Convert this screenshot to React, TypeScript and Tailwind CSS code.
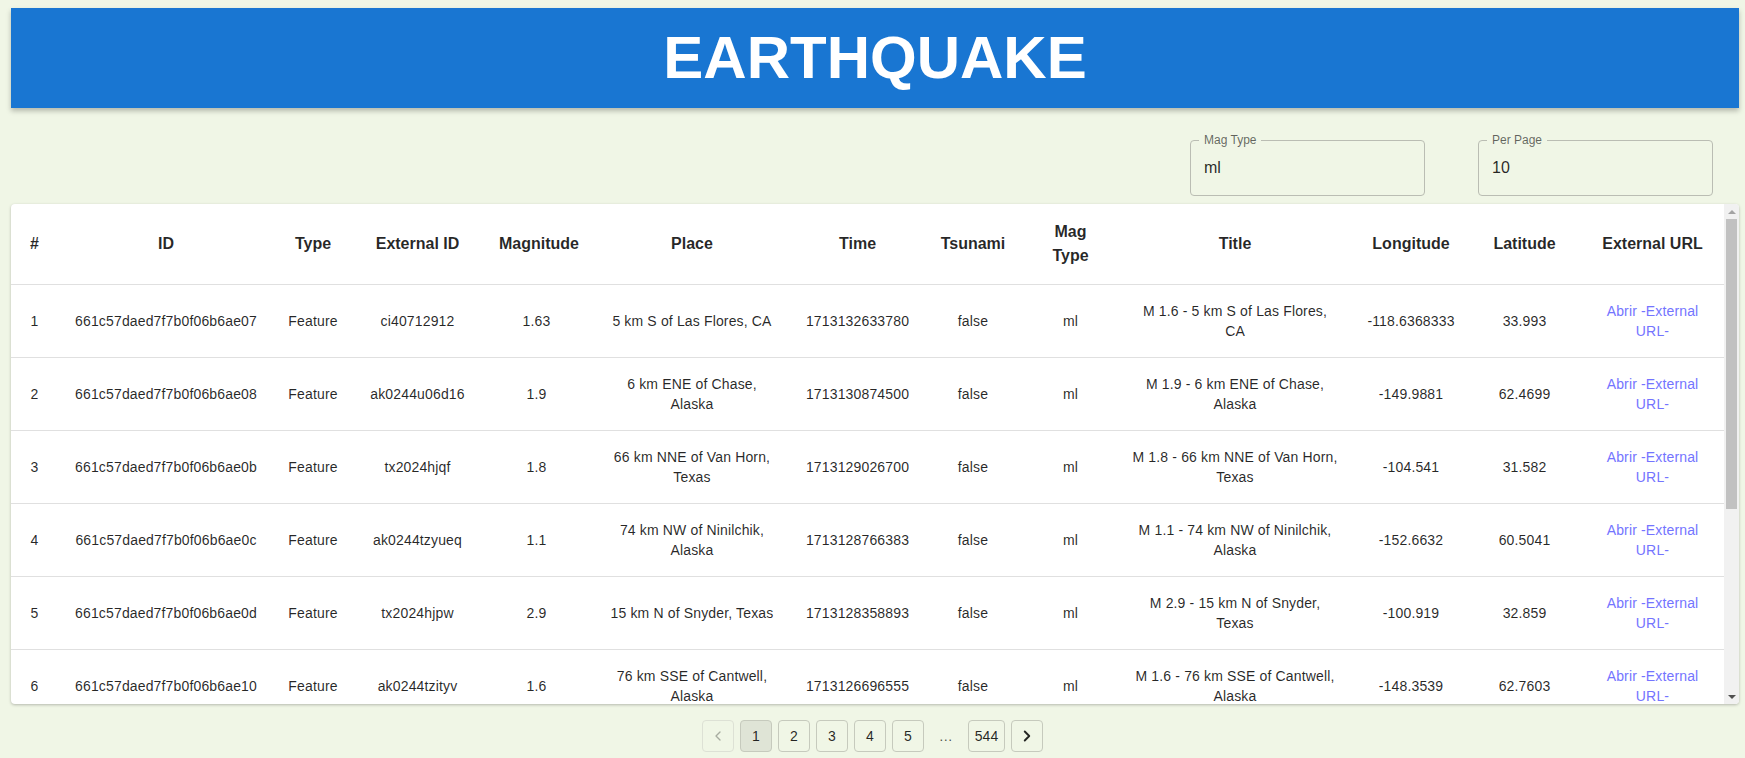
import { ChevronLeft, ChevronRight } from "lucide-react";

type Quake = {
  id: string;
  externalId: string;
  mag: string;
  place: string;
  time: string;
  title: string;
  lon: string;
  lat: string;
};

const quakes: Quake[] = [
  { id: "661c57daed7f7b0f06b6ae07", externalId: "ci40712912", mag: "1.63", place: "5 km S of Las Flores, CA", time: "1713132633780", title: "M 1.6 - 5 km S of Las Flores, CA", lon: "-118.6368333", lat: "33.993" },
  { id: "661c57daed7f7b0f06b6ae08", externalId: "ak0244u06d16", mag: "1.9", place: "6 km ENE of Chase, Alaska", time: "1713130874500", title: "M 1.9 - 6 km ENE of Chase, Alaska", lon: "-149.9881", lat: "62.4699" },
  { id: "661c57daed7f7b0f06b6ae0b", externalId: "tx2024hjqf", mag: "1.8", place: "66 km NNE of Van Horn, Texas", time: "1713129026700", title: "M 1.8 - 66 km NNE of Van Horn, Texas", lon: "-104.541", lat: "31.582" },
  { id: "661c57daed7f7b0f06b6ae0c", externalId: "ak0244tzyueq", mag: "1.1", place: "74 km NW of Ninilchik, Alaska", time: "1713128766383", title: "M 1.1 - 74 km NW of Ninilchik, Alaska", lon: "-152.6632", lat: "60.5041" },
  { id: "661c57daed7f7b0f06b6ae0d", externalId: "tx2024hjpw", mag: "2.9", place: "15 km N of Snyder, Texas", time: "1713128358893", title: "M 2.9 - 15 km N of Snyder, Texas", lon: "-100.919", lat: "32.859" },
  { id: "661c57daed7f7b0f06b6ae10", externalId: "ak0244tzityv", mag: "1.6", place: "76 km SSE of Cantwell, Alaska", time: "1713126696555", title: "M 1.6 - 76 km SSE of Cantwell, Alaska", lon: "-148.3539", lat: "62.7603" },
  { id: "661c57daed7f7b0f06b6ae12", externalId: "ak0244tzfx1c", mag: "1.4", place: "32 km W of Willow, Alaska", time: "1713125901234", title: "M 1.4 - 32 km W of Willow, Alaska", lon: "-150.6712", lat: "61.7458" },
  { id: "661c57daed7f7b0f06b6ae13", externalId: "ci40712880", mag: "1.12", place: "8 km NE of Aguanga, CA", time: "1713125017560", title: "M 1.1 - 8 km NE of Aguanga, CA", lon: "-116.8123333", lat: "33.4855" },
  { id: "661c57daed7f7b0f06b6ae15", externalId: "tx2024hjmk", mag: "2.1", place: "41 km W of Mentone, Texas", time: "1713124447911", title: "M 2.1 - 41 km W of Mentone, Texas", lon: "-103.998", lat: "31.701" },
  { id: "661c57daed7f7b0f06b6ae16", externalId: "ak0244tz7uqa", mag: "1.5", place: "19 km SE of Tyonek, Alaska", time: "1713123810032", title: "M 1.5 - 19 km SE of Tyonek, Alaska", lon: "-151.0204", lat: "60.9912" },
];

const columns = [
  { label: "#", width: "w-[47px]" },
  { label: "ID", width: "w-[216px]" },
  { label: "Type", width: "w-[78px]" },
  { label: "External ID", width: "w-[131px]" },
  { label: "Magnitude", width: "w-[107px]" },
  { label: "Place", width: "w-[204px]" },
  { label: "Time", width: "w-[127px]" },
  { label: "Tsunami", width: "w-[104px]" },
  { label: "Mag Type", width: "w-[91px]" },
  { label: "Title", width: "w-[238px]" },
  { label: "Longitude", width: "w-[114px]" },
  { label: "Latitude", width: "w-[113px]" },
  { label: "External URL", width: "" },
];

const Field = ({ label, value }: { label: string; value: string }) => (
  <div className="relative h-[56px] w-[235px] rounded border border-[#babdb3] px-[13px] flex items-center">
    <span className="absolute -top-[9px] left-[8px] bg-[#f0f6e6] px-[5px] text-[12px] leading-[16px] text-black/60">
      {label}
    </span>
    <span className="text-[16px] text-black/85">{value}</span>
  </div>
);

const PageButton = ({ children, active = false, disabled = false }: { children: React.ReactNode; active?: boolean; disabled?: boolean }) => (
  <button
    className={
      active
        ? "h-[32px] min-w-[32px] px-[6px] rounded border border-[#c6cabd] bg-[#dfe4d6] text-[14px] text-black/85 flex items-center justify-center"
        : disabled
        ? "h-[32px] min-w-[32px] px-[6px] rounded border border-[#dde1d5] text-black/30 flex items-center justify-center"
        : "h-[32px] min-w-[32px] px-[6px] rounded border border-[#c6cabd] text-[14px] text-black/85 flex items-center justify-center"
    }
  >
    {children}
  </button>
);

// barra de scroll clásica (el navegador headless no la pinta)
const ScrollBar = () => (
  <div className="w-[15px] shrink-0 bg-[#f1f1f1] flex flex-col items-center">
    <div className="h-[15px] flex items-center justify-center">
      <div className="w-0 h-0 border-x-[4px] border-x-transparent border-b-[4px] border-b-[#a3a3a3]" />
    </div>
    <div className="w-[11px] h-[290px] bg-[#c1c1c1]" />
    <div className="flex-1" />
    <div className="h-[15px] flex items-center justify-center">
      <div className="w-0 h-0 border-x-[4px] border-x-transparent border-t-[4px] border-t-[#505050]" />
    </div>
  </div>
);

export default function App() {
  return (
    <div className="min-h-screen bg-[#f0f6e6] pt-[8px] text-[#222] font-['Liberation_Sans',Arial,sans-serif]">
      {/* header */}
      <header className="ml-[11px] mr-[6px] h-[100px] bg-[#1976d2] shadow-[0_3px_5px_rgba(0,0,0,0.25)] flex items-center justify-center">
        <h1 className="text-[60px] font-bold text-white">EARTHQUAKE</h1>
      </header>

      {/* filtros */}
      <div className="mt-[32px] flex justify-end gap-[53px] pr-[32px]">
        <Field label="Mag Type" value="ml" />
        <Field label="Per Page" value="10" />
      </div>

      {/* tabla */}
      <div className="mt-[8px] ml-[11px] mr-[6px] h-[500px] flex overflow-hidden rounded bg-white shadow-[0_1px_3px_rgba(0,0,0,0.25)]">
        <div className="flex-1 overflow-hidden">
          <table className="w-full table-fixed border-collapse text-[14px] tracking-[0.01071em]">
            <colgroup>
              {columns.map((c) => (
                <col key={c.label} className={c.width} />
              ))}
            </colgroup>
            <thead>
              <tr className="h-[80px] border-b border-[#e0e0e0]">
                {columns.map((c) => (
                  <th key={c.label} className="px-[16px] text-center text-[16px] font-bold leading-[24px] tracking-normal text-black/85">
                    {c.label}
                  </th>
                ))}
              </tr>
            </thead>
            <tbody>
              {quakes.map((q, i) => (
                <tr key={q.id} className="h-[73px] border-b border-[#e0e0e0] text-center leading-[20px] text-black/85">
                  <td className="px-[12px]">{i + 1}</td>
                  <td className="px-[8px]">{q.id}</td>
                  <td className="px-[8px]">Feature</td>
                  <td className="px-[8px]">{q.externalId}</td>
                  <td className="px-[16px]">{q.mag}</td>
                  <td className="px-[16px]">{q.place}</td>
                  <td className="px-[8px]">{q.time}</td>
                  <td className="px-[16px]">false</td>
                  <td className="px-[16px]">ml</td>
                  <td className="px-[16px]">{q.title}</td>
                  <td className="px-[8px]">{q.lon}</td>
                  <td className="px-[16px]">{q.lat}</td>
                  <td className="px-[16px]">
                    <a href="#" className="text-[#7474ff]">
                      Abrir -External URL-
                    </a>
                  </td>
                </tr>
              ))}
            </tbody>
          </table>
        </div>
        <ScrollBar />
      </div>

      {/* paginación */}
      <nav className="mt-[16px] flex items-center justify-center gap-[6px] pb-[8px]">
        <PageButton disabled>
          <ChevronLeft size={16} />
        </PageButton>
        <PageButton active>1</PageButton>
        <PageButton>2</PageButton>
        <PageButton>3</PageButton>
        <PageButton>4</PageButton>
        <PageButton>5</PageButton>
        <span className="w-[32px] text-center text-[14px] text-black/70">…</span>
        <PageButton>544</PageButton>
        <PageButton>
          <ChevronRight size={18} strokeWidth={2.5} />
        </PageButton>
      </nav>
    </div>
  );
}
